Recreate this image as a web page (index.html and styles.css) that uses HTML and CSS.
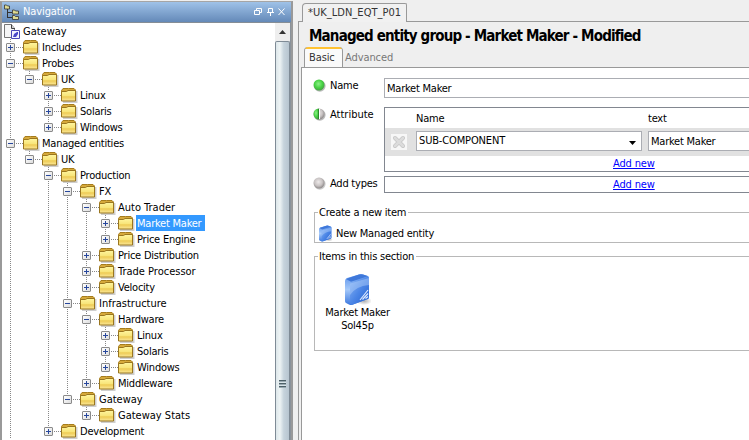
FILE: index.html
```html
<!DOCTYPE html>
<html lang="en">
<head>
<meta charset="utf-8">
<title>Gateway setup editor</title>
<link rel="stylesheet" href="styles.css">
</head>
<body>
<div class="app">
  <aside class="nav">
    <header class="nav-head">
      <svg class="nav-logo" width="16" height="16" viewBox="0 0 16 16"><path d="M3.500 5v9M4 8.500h4M4 13.500h4" stroke="#333" fill="none"/><g fill="#dedb91" stroke="#333" stroke-width=".8"><path d="M.5 1h2l1 1h2v3h-5zM8.500 6h2l1 1h3v3h-6zM8.500 11.500h2l1 1h3v3h-6z"/></g></svg>
      <span class="nav-title">Navigation</span>
      <svg class="nav-tools" width="32" height="10" viewBox="0 0 32 10"><g stroke="#fff" fill="none"><path d="M.5 3.500h5v4h-5zM2.500 3V1.500h5v4H6M14.500 5V1.500h4V5M13 5.500h7M16.500 6v3M24.500 1.500l6 6.500M30.500 1.500l-6 6.500"/></g></svg>
    </header>
    <div class="nav-body">
      <div class="tree">
        <div class="row root"><svg width="18" height="16" viewBox="0 0 18 16"><path d="M1.500 1.500h7l3 4v9h-10z" fill="#f6f6f6" stroke="#777"/><path d="M8.500 1.500v4h3.500" fill="#ccc" stroke="#444"/><path d="M8.500 7.500h8v8h-8z" fill="#f4f4ff" stroke="#4a48b8"/><path d="M10 14l1-3 3-2h1v2l-2 3z" fill="#4a48c8"/></svg><span class="label">Gateway</span></div>
        <ul>
          <li><div class="row"><i class="x plus"></i><svg class="f"><use href="#folder"/></svg><span class="label">Includes</span></div></li>
          <li><div class="row"><i class="x"></i><svg class="f"><use href="#folder"/></svg><span class="label">Probes</span></div>
            <ul>
              <li><div class="row"><i class="x"></i><svg class="f"><use href="#folder"/></svg><span class="label">UK</span></div>
                <ul>
                  <li><div class="row"><i class="x plus"></i><svg class="f"><use href="#folder"/></svg><span class="label">Linux</span></div></li>
                  <li><div class="row"><i class="x plus"></i><svg class="f"><use href="#folder"/></svg><span class="label">Solaris</span></div></li>
                  <li><div class="row"><i class="x plus"></i><svg class="f"><use href="#folder"/></svg><span class="label">Windows</span></div></li>
                </ul>
              </li>
            </ul>
          </li>
          <li><div class="row"><i class="x"></i><svg class="f"><use href="#folder"/></svg><span class="label">Managed entities</span></div>
            <ul>
              <li><div class="row"><i class="x"></i><svg class="f"><use href="#folder"/></svg><span class="label">UK</span></div>
                <ul>
                  <li><div class="row"><i class="x"></i><svg class="f"><use href="#folder"/></svg><span class="label">Production</span></div>
                    <ul>
                      <li><div class="row"><i class="x"></i><svg class="f"><use href="#folder"/></svg><span class="label">FX</span></div>
                        <ul>
                          <li><div class="row"><i class="x"></i><svg class="f"><use href="#folder"/></svg><span class="label wide">Auto Trader</span></div>
                            <ul>
                              <li><div class="row"><i class="x plus"></i><svg class="f"><use href="#folder"/></svg><span class="label selected">Market Maker</span></div></li>
                              <li><div class="row"><i class="x plus"></i><svg class="f"><use href="#folder"/></svg><span class="label">Price Engine</span></div></li>
                            </ul>
                          </li>
                          <li><div class="row"><i class="x plus"></i><svg class="f"><use href="#folder"/></svg><span class="label">Price Distribution</span></div></li>
                          <li><div class="row"><i class="x plus"></i><svg class="f"><use href="#folder"/></svg><span class="label wide">Trade Processor</span></div></li>
                          <li><div class="row"><i class="x plus"></i><svg class="f"><use href="#folder"/></svg><span class="label">Velocity</span></div></li>
                        </ul>
                      </li>
                      <li><div class="row"><i class="x"></i><svg class="f"><use href="#folder"/></svg><span class="label wide">Infrastructure</span></div>
                        <ul>
                          <li><div class="row"><i class="x"></i><svg class="f"><use href="#folder"/></svg><span class="label">Hardware</span></div>
                            <ul>
                              <li><div class="row"><i class="x plus"></i><svg class="f"><use href="#folder"/></svg><span class="label">Linux</span></div></li>
                              <li><div class="row"><i class="x plus"></i><svg class="f"><use href="#folder"/></svg><span class="label">Solaris</span></div></li>
                              <li><div class="row"><i class="x plus"></i><svg class="f"><use href="#folder"/></svg><span class="label">Windows</span></div></li>
                            </ul>
                          </li>
                          <li><div class="row"><i class="x plus"></i><svg class="f"><use href="#folder"/></svg><span class="label">Middleware</span></div></li>
                        </ul>
                      </li>
                      <li><div class="row"><i class="x"></i><svg class="f"><use href="#folder"/></svg><span class="label wide">Gateway</span></div>
                        <ul>
                          <li><div class="row"><i class="x plus"></i><svg class="f"><use href="#folder"/></svg><span class="label wide">Gateway Stats</span></div></li>
                        </ul>
                      </li>
                    </ul>
                  </li>
                  <li><div class="row"><i class="x plus"></i><svg class="f"><use href="#folder"/></svg><span class="label">Development</span></div></li>
                </ul>
              </li>
            </ul>
          </li>
        </ul>
      </div>
      <div class="scroll">
        <div class="scroll-up"><svg width="7" height="4" viewBox="0 0 7 4"><path d="M0 4L3.500 0 7 4z" fill="#333"/></svg></div>
        <div class="thumb"><i class="grip"></i></div>
      </div>
    </div>
  </aside>
  <main class="editor">
    <div class="doc-tabs"><div class="doc-tab"><span>*UK_LDN_EQT_P01</span></div></div>
    <div class="doc">
      <h1><span>Managed entity group - Market Maker - Modified</span></h1>
      <div class="tabs"><div class="tab active">Basic</div><div class="tab">Advanced</div></div>
      <div class="form">
        <div class="field name-field"><svg class="dot"><use href="#dot-on"/></svg><label>Name</label><div class="input">Market Maker</div></div>
        <div class="field attr-field"><svg class="dot"><use href="#dot-half"/></svg><label class="wide">Attribute</label>
          <div class="table">
            <div class="thead"><span>Name</span><span>text</span></div>
            <div class="trow">
              <svg class="del" width="16" height="16" viewBox="0 0 16 16"><path fill="#f7f7f7" d="M0 0h16v16H0z"/><path d="M4 4l8 8M12 4l-8 8" stroke="#c4c4c4" stroke-width="4" stroke-linecap="round"/><path d="M4 4l8 8M12 4l-8 8" stroke="#dcdcdc" stroke-width="2.600" stroke-linecap="round"/></svg>
              <div class="input combo"><span>SUB-COMPONENT</span><svg width="7" height="4" viewBox="0 0 7 4"><path d="M0 0h7L3.500 4z"/></svg></div>
              <div class="input value">Market Maker</div>
            </div>
            <div class="add"><a>Add new</a></div>
          </div>
        </div>
        <div class="field type-field"><svg class="dot"><use href="#dot-off"/></svg><label>Add types</label><div class="table add"><a>Add new</a></div></div>
        <section class="group create"><h2>Create a new item</h2><div class="create-item"><svg width="15" height="17" viewBox="0 0 27 33"><use href="#book"/></svg><span>New Managed entity</span></div></section>
        <section class="group items"><h2>Items in this section</h2><div class="item"><svg width="27" height="33" viewBox="0 0 27 33"><use href="#book"/></svg><span class="item-name">Market Maker</span><span class="item-name">Sol45p</span></div></section>
      </div>
    </div>
  </main>
</div>
<svg class="defs" width="0" height="0">
  <defs>
    <linearGradient id="fold" x2="0" y2="1"><stop offset="0" stop-color="#fff6a0"/><stop offset=".5" stop-color="#f8e57a"/><stop offset=".6" stop-color="#eecb55"/><stop offset="1" stop-color="#fbe99a"/></linearGradient>
    <radialGradient id="green" cx=".45" cy=".4" r=".6"><stop offset="0" stop-color="#8df088"/><stop offset=".6" stop-color="#46d243"/><stop offset="1" stop-color="#46a046"/></radialGradient>
    <radialGradient id="grey" cx=".45" cy=".4" r=".6"><stop offset="0" stop-color="#eeeaea"/><stop offset=".6" stop-color="#c8c3c3"/><stop offset="1" stop-color="#8d8888"/></radialGradient>
    <linearGradient id="blue" x1="0" y1="0" x2="1" y2="1"><stop offset="0" stop-color="#8db8f5"/><stop offset=".5" stop-color="#4c86e6"/><stop offset="1" stop-color="#2360cf"/></linearGradient>
    <linearGradient id="side" x2="0" y2="1"><stop offset="0" stop-color="#5a92ea"/><stop offset=".5" stop-color="#a5c9fa"/><stop offset="1" stop-color="#3c78de"/></linearGradient>
    <radialGradient id="shade"><stop offset="0" stop-color="#777" stop-opacity=".6"/><stop offset="1" stop-color="#777" stop-opacity="0"/></radialGradient>
  </defs>
  <symbol id="folder" viewBox="0 0 17 16"><path d="M2 15h13.500V4" fill="none" stroke="#cfcfcf" stroke-width="2"/><path d="M.5 3.500L2 1.500h4L7.500 1.500H13L14.500 3v3H.5z" fill="#d6a93a" stroke="#a67c1c"/><path d="M.5 4.500h5l1.500-1h7.500v10.500H.5z" fill="url(#fold)" stroke="#9a761f"/></symbol>
  <symbol id="dot-on" viewBox="0 0 13 13"><circle cx="6.800" cy="7" r="5.800" fill="#bbb"/><circle cx="6" cy="6" r="5.500" fill="url(#green)"/></symbol>
  <symbol id="dot-off" viewBox="0 0 13 13"><circle cx="6.800" cy="7" r="5.800" fill="#ccc"/><circle cx="6" cy="6" r="5.500" fill="url(#grey)"/></symbol>
  <symbol id="dot-half" viewBox="0 0 13 13"><circle cx="6.800" cy="7" r="5.800" fill="#bbb"/><circle cx="6" cy="6" r="5.500" fill="url(#grey)"/><path d="M6 .500a5.500 5.500 0 0 0 0 11z" fill="url(#green)"/><path d="M5.500 1v10" stroke="#2a8a2c"/><path d="M6.500 1v10" stroke="#fff"/></symbol>
  <symbol id="book" viewBox="0 0 27 33"><ellipse cx="20" cy="28" rx="8" ry="4" fill="url(#shade)"/><path d="M1 8Q1 6 3 5L15 1.500Q17 .800 19 1.500L24 3Q25 3.500 25 5v19q0 1.500-1 2L9 31.500Q7 32.500 5 31.500L2 30Q1 29.500 1 28z" fill="url(#side)"/><path d="M6 10.500Q6 9 8 8.500L23 4q2-.5 2 1.500v18.500q0 1.500-1 2L9 31.500q-3 1-3-1.500z" fill="url(#blue)"/><path d="M2 6L15 1.500Q17 .800 19 1.500L24 3.300 7 8.800z" fill="#3f78da"/><path d="M6 10.500L25 5v7Q12 13 6 22z" fill="#b5d2fb" opacity=".45"/><path d="M16 27l8-10M18.500 26.500l5.500-6M21.500 25.500l2.500-2" stroke="#dce9ff" stroke-width="1.200"/></symbol>
</svg>
</body>
</html>
```
FILE: styles.css
```css
* { box-sizing: border-box; }
body { margin: 0; background: #efefef; overflow: hidden; color: #000;
  font: 11px/16px "DejaVu Sans Condensed", "DejaVu Sans", sans-serif; font-stretch: condensed; letter-spacing: -0.23px; }
ul { list-style: none; margin: 0; padding: 0; }
.app { display: flex; width: 749px; height: 440px; overflow: hidden; }
.defs { position: absolute; }

.nav { width: 293px; margin-top: 1px; flex: none; display: flex; flex-direction: column;
  border: 1px solid #999; border-width: 1px 2px 0 2px; border-color: #a5a5a5 #999 #999 #999; }
.nav-head { height: 20px; flex: none; display: flex; align-items: center; padding: 0 5px 0 2px;
  background: linear-gradient(#9fc2e8, #6489b8); color: #fff; }
.nav-logo { margin-right: 3px; }
.nav-title { flex: 1; letter-spacing: -0.1px; }
.nav-body { flex: 1; min-height: 0; display: flex; background: #fff; border-top: 1px solid #858d95; overflow: hidden; }
.tree { flex: 1; height: 417px; overflow: hidden; }
.row { height: 16px; display: flex; align-items: center; position: relative; white-space: nowrap; }
.root svg { margin: 0 3px 0 1px; }
.root .label { padding-left: 0; margin-left: -1px; letter-spacing: 0; }
.tree ul ul { margin-left: 19px; }
.tree li { position: relative; }
.tree li::before { content: ""; position: absolute; left: 8px; top: 0; width: 1px; height: 100%;
  background: repeating-linear-gradient(#888 0 1px, transparent 1px 2px); }
.tree ul ul > li:last-child::before { height: 8px; }
.row .x { position: relative; width: 9px; height: 9px; margin: 0 8px 0 4px; flex: none; background: linear-gradient(135deg, #fff, #ddd);
  border: 1px solid #8a8a8a; border-radius: 1px; }
.x::before { content: ""; position: absolute; left: 1px; top: 3px; width: 5px; height: 1px; background: #27479c; }
.plus::after { content: ""; position: absolute; left: 3px; top: 1px; width: 1px; height: 5px; background: #27479c; }
li > .row::before { content: ""; position: absolute; left: 14px; top: 8px; width: 7px; height: 1px;
  background: repeating-linear-gradient(90deg, #888 0 1px, transparent 1px 2px); }
.f { width: 17px; height: 16px; flex: none; position: relative; }
.label { padding: 1px 4px 0 1px; margin-left: 1px; height: 16px; line-height: 16px; }
.wide { letter-spacing: 0; }
.selected { background: #3399ff; color: #fff; }

.scroll { width: 16px; flex: none; display: flex; flex-direction: column; background: #eee; border-right: 1px solid #8a929a; }
.scroll-up { height: 18px; display: flex; align-items: center; justify-content: center; flex: none; }
.thumb { flex: 1; display: flex; justify-content: center; border: 1px solid #7f8b96; border-bottom: 0; border-radius: 2px 2px 0 0;
  background: linear-gradient(90deg, #dde7ea, #eef4f5 30%, #c6d3dc 60%, #b7c5d0); }
.grip { width: 7px; height: 8px; margin-top: 338px;
  background: repeating-linear-gradient(#4d6068 0 1px, #98a8b0 1px 2px, #d8e3e8 2px 3px); }

.editor { flex: 1; min-width: 0; margin-left: 5px; display: flex; flex-direction: column; white-space: nowrap; }
.doc-tabs { height: 22px; flex: none; padding: 3px 0 0 4px; border-bottom: 1px solid #999; }
.doc-tab { width: 105px; height: 19px; border: 1px solid #999; border-bottom: 0; border-radius: 4px 2px 0 0; background: #f1f1f1;
  padding-left: 5px; line-height: 18px; color: #333; letter-spacing: 0.03px; }
.doc { flex: 1; border-left: 1px solid #999; padding-left: 2px; display: flex; flex-direction: column; min-height: 0; }
h1 { margin: 0; height: 25px; flex: none; padding: 1px 0 0 8px; font-size: 15px; line-height: 27px; letter-spacing: -0.84px; }
.tabs { height: 20px; flex: none; display: flex; padding-left: 3px; }
.tab { line-height: 22px; color: #777; padding-left: 2px; letter-spacing: -0.1px; }
.active { width: 39px; border: 1px solid #999; border-width: 0 1px; border-radius: 4px 4px 0 0; padding-left: 4px; color: #333;
  background: linear-gradient(#ffc232 0 2px, #fafafa 2px); }
.form { flex: 1; background: #fff; border: 1px solid #999; border-width: 1px 0 0 1px; padding: 10px 0 0 12px; }
.field { display: flex; }
.dot { width: 13px; height: 13px; flex: none; margin: 1px 4px 0 -1px; }
label { width: 54px; flex: none; }
.input { border: 1px solid #abadb3; border-right: 0; background: #fff; height: 20px; line-height: 20px; padding-left: 2px; flex: 1; }
.name-field { height: 29px; }
.attr-field { height: 69px; }
.table { flex: 1; border: 1px solid #828790; border-right: 0; }
.attr-field .table { height: 65px; }
.thead { height: 20px; display: flex; line-height: 21px; padding-left: 31px; }
.thead span:first-child { width: 232px; }
.trow { height: 28px; background: #e1e1e1; display: flex; padding: 3px 0 0 6px; }
.del { margin: 3px 9px 0 0; }
.combo { flex: none; width: 226px; border-right: 1px solid #abadb3; display: flex; align-items: center; justify-content: space-between; padding-right: 5px; margin-right: 6px; letter-spacing: -0.15px; }
.combo svg { margin-top: 4px; }
.add { padding-left: 228px; line-height: 15px; height: 17px; }
.add a { color: #00f; text-decoration: underline; letter-spacing: -0.15px; }
.type-field { height: 36px; }
.group { border: 1px solid #b8b8b8; border-right: 0; }
.group h2 { display: table; font: inherit; margin: -9px 0 0 3px; padding: 0 2px 0 1px; height: 16px; line-height: 17px; background: #fff; }
.create { height: 31px; }
.create-item { display: flex; align-items: center; padding: 4px 0 0 3px; gap: 3px; }
.items { height: 95px; margin-top: 13px; }
.item { width: 85px; display: flex; flex-direction: column; align-items: center; padding-top: 8px; }
.item-name { line-height: 13px; }
```
